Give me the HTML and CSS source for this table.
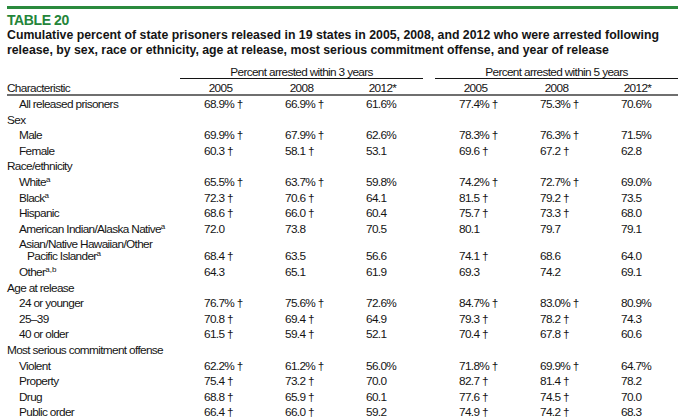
FILE: index.html
```html
<!DOCTYPE html>
<html lang="en">
<head>
<meta charset="utf-8">
<title>Table 20</title>
<link rel="stylesheet" href="styles.css">
</head>
<body>
<div class="page">
  <div class="bar"></div>
  <div class="tag">TABLE 20</div>
  <h1 class="title">Cumulative percent of state prisoners released in 19 states in 2005, 2008, and 2012 who were arrested following<br>release, by sex, race or ethnicity, age at release, most serious commitment offense, and year of release</h1>
  <div class="table">
    <div class="row head1">
      <div></div>
      <div class="span">Percent arrested within 3 years</div>
      <div class="span s">Percent arrested within 5 years</div>
    </div>
    <div class="row head2">
      <div class="lab">Characteristic</div>
      <div class="y">2005</div>
      <div class="y">2008</div>
      <div class="y">2012*</div>
      <div class="y s">2005</div>
      <div class="y">2008</div>
      <div class="y">2012*</div>
    </div>
    <div class="row first">
      <div class="lab sub">All released prisoners</div>
      <div class="v">68.9% †</div><div class="v">66.9% †</div><div class="v">61.6%</div>
      <div class="v s">77.4% †</div><div class="v">75.3% †</div><div class="v">70.6%</div>
    </div>
    <div class="row"><div class="lab">Sex</div></div>
    <div class="row">
      <div class="lab sub">Male</div>
      <div class="v">69.9% †</div><div class="v">67.9% †</div><div class="v">62.6%</div>
      <div class="v s">78.3% †</div><div class="v">76.3% †</div><div class="v">71.5%</div>
    </div>
    <div class="row">
      <div class="lab sub">Female</div>
      <div class="v">60.3 †</div><div class="v">58.1 †</div><div class="v">53.1</div>
      <div class="v s">69.6 †</div><div class="v">67.2 †</div><div class="v">62.8</div>
    </div>
    <div class="row"><div class="lab">Race/ethnicity</div></div>
    <div class="row">
      <div class="lab sub">White<sup>a</sup></div>
      <div class="v">65.5% †</div><div class="v">63.7% †</div><div class="v">59.8%</div>
      <div class="v s">74.2% †</div><div class="v">72.7% †</div><div class="v">69.0%</div>
    </div>
    <div class="row">
      <div class="lab sub">Black<sup>a</sup></div>
      <div class="v">72.3 †</div><div class="v">70.6 †</div><div class="v">64.1</div>
      <div class="v s">81.5 †</div><div class="v">79.2 †</div><div class="v">73.5</div>
    </div>
    <div class="row">
      <div class="lab sub">Hispanic</div>
      <div class="v">68.6 †</div><div class="v">66.0 †</div><div class="v">60.4</div>
      <div class="v s">75.7 †</div><div class="v">73.3 †</div><div class="v">68.0</div>
    </div>
    <div class="row">
      <div class="lab sub">American Indian/Alaska Native<sup>a</sup></div>
      <div class="v">72.0</div><div class="v">73.8</div><div class="v">70.5</div>
      <div class="v s">80.1</div><div class="v">79.7</div><div class="v">79.1</div>
    </div>
    <div class="row">
      <div class="lab sub wrap">Asian/Native Hawaiian/Other<br><span class="cont">Pacific Islander<sup>a</sup></span></div>
      <div class="v">68.4 †</div><div class="v">63.5</div><div class="v">56.6</div>
      <div class="v s">74.1 †</div><div class="v">68.6</div><div class="v">64.0</div>
    </div>
    <div class="row">
      <div class="lab sub">Other<sup>a,b</sup></div>
      <div class="v">64.3</div><div class="v">65.1</div><div class="v">61.9</div>
      <div class="v s">69.3</div><div class="v">74.2</div><div class="v">69.1</div>
    </div>
    <div class="row"><div class="lab">Age at release</div></div>
    <div class="row">
      <div class="lab sub">24 or younger</div>
      <div class="v">76.7% †</div><div class="v">75.6% †</div><div class="v">72.6%</div>
      <div class="v s">84.7% †</div><div class="v">83.0% †</div><div class="v">80.9%</div>
    </div>
    <div class="row">
      <div class="lab sub">25–39</div>
      <div class="v">70.8 †</div><div class="v">69.4 †</div><div class="v">64.9</div>
      <div class="v s">79.3 †</div><div class="v">78.2 †</div><div class="v">74.3</div>
    </div>
    <div class="row">
      <div class="lab sub">40 or older</div>
      <div class="v">61.5 †</div><div class="v">59.4 †</div><div class="v">52.1</div>
      <div class="v s">70.4 †</div><div class="v">67.8 †</div><div class="v">60.6</div>
    </div>
    <div class="row"><div class="lab">Most serious commitment offense</div></div>
    <div class="row">
      <div class="lab sub">Violent</div>
      <div class="v">62.2% †</div><div class="v">61.2% †</div><div class="v">56.0%</div>
      <div class="v s">71.8% †</div><div class="v">69.9% †</div><div class="v">64.7%</div>
    </div>
    <div class="row">
      <div class="lab sub">Property</div>
      <div class="v">75.4 †</div><div class="v">73.2 †</div><div class="v">70.0</div>
      <div class="v s">82.7 †</div><div class="v">81.4 †</div><div class="v">78.2</div>
    </div>
    <div class="row">
      <div class="lab sub">Drug</div>
      <div class="v">68.8 †</div><div class="v">65.9 †</div><div class="v">60.1</div>
      <div class="v s">77.6 †</div><div class="v">74.5 †</div><div class="v">70.0</div>
    </div>
    <div class="row">
      <div class="lab sub">Public order</div>
      <div class="v">66.4 †</div><div class="v">66.0 †</div><div class="v">59.2</div>
      <div class="v s">74.9 †</div><div class="v">74.2 †</div><div class="v">68.3</div>
    </div>
  </div>
</div>
</body>
</html>
```

FILE: styles.css
```css
* { box-sizing: border-box; }

body {
  margin: 0;
  background: #ffffff;
  color: #141414;
  font-family: "Liberation Sans", Arial, sans-serif;
}

.page {
  width: 671px;
  margin-left: 7px;
}

.bar {
  margin-top: 6px;
  height: 3px;
  background: #2a8a3d;
}

.tag {
  margin-top: 3.6px;
  font-size: 14px;
  font-weight: bold;
  line-height: 15px;
  letter-spacing: -0.4px;
  color: #24853a;
}

.title {
  margin: 0;
  font-size: 12.3px;
  font-weight: bold;
  line-height: 15.7px;
  white-space: nowrap;
}

.table {
  margin-top: 7px;
  font-size: 11.8px;
  letter-spacing: -0.65px;
}

.row {
  display: grid;
  grid-template-columns: 173px 81px 81px 81px 93px 81px 81px;
  align-items: end;
  line-height: 12px;
  padding-top: 3.6px;
  white-space: nowrap;
}

.head1 {
  padding-top: 0;
}

.span {
  grid-column: span 3;
  text-align: center;
  border-bottom: 1px solid #141414;
}

.span.s {
  grid-column: 5 / span 3;
  margin-left: 12px;
}

.head2 {
  padding-top: 3.5px;
  line-height: 11px;
  border-bottom: 2px solid #6f6f6f;
}

.y {
  text-align: center;
}

.y.s {
  padding-left: 12px;
}

.row.first {
  padding-top: 2.5px;
}

.lab.sub {
  padding-left: 12px;
}

.wrap {
  line-height: 12px;
}

.cont {
  padding-left: 8px;
}

.v {
  padding-left: 24px;
}

.v.s {
  padding-left: 36px;
}

sup {
  font-size: 8px;
  line-height: 0;
  vertical-align: 4px;
  letter-spacing: 0;
}
```
